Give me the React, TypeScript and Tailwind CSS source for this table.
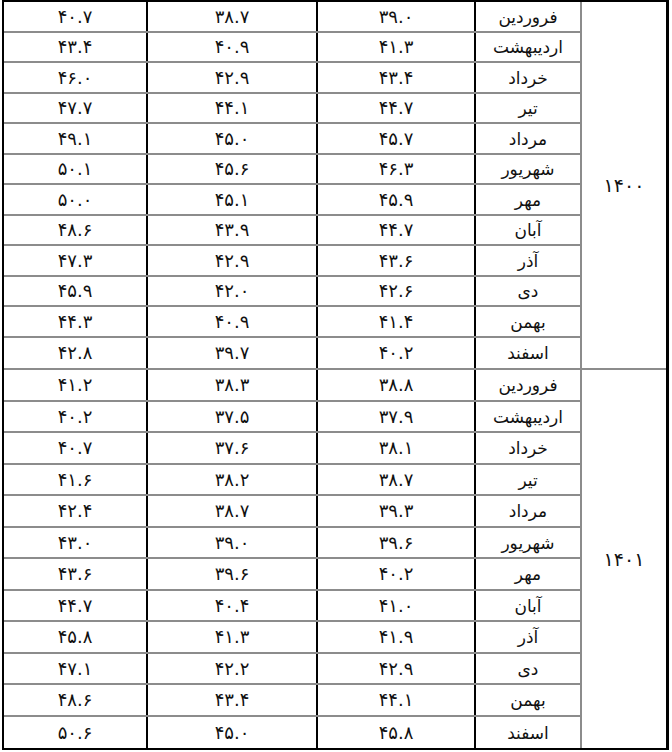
const groups = [
  {
    year: "۱۴۰۰",
    rowH: "h-[30.5px]",
    rows: [
      ["۴۰.۷", "۳۸.۷", "۳۹.۰", "فروردین"],
      ["۴۳.۴", "۴۰.۹", "۴۱.۳", "اردیبهشت"],
      ["۴۶.۰", "۴۲.۹", "۴۳.۴", "خرداد"],
      ["۴۷.۷", "۴۴.۱", "۴۴.۷", "تیر"],
      ["۴۹.۱", "۴۵.۰", "۴۵.۷", "مرداد"],
      ["۵۰.۱", "۴۵.۶", "۴۶.۳", "شهریور"],
      ["۵۰.۰", "۴۵.۱", "۴۵.۹", "مهر"],
      ["۴۸.۶", "۴۳.۹", "۴۴.۷", "آبان"],
      ["۴۷.۳", "۴۲.۹", "۴۳.۶", "آذر"],
      ["۴۵.۹", "۴۲.۰", "۴۲.۶", "دی"],
      ["۴۴.۳", "۴۰.۹", "۴۱.۴", "بهمن"],
      ["۴۲.۸", "۳۹.۷", "۴۰.۲", "اسفند"],
    ],
  },
  {
    year: "۱۴۰۱",
    rowH: "h-[31.5px]",
    rows: [
      ["۴۱.۲", "۳۸.۳", "۳۸.۸", "فروردین"],
      ["۴۰.۲", "۳۷.۵", "۳۷.۹", "اردیبهشت"],
      ["۴۰.۷", "۳۷.۶", "۳۸.۱", "خرداد"],
      ["۴۱.۶", "۳۸.۲", "۳۸.۷", "تیر"],
      ["۴۲.۴", "۳۸.۷", "۳۹.۳", "مرداد"],
      ["۴۳.۰", "۳۹.۰", "۳۹.۶", "شهریور"],
      ["۴۳.۶", "۳۹.۶", "۴۰.۲", "مهر"],
      ["۴۴.۷", "۴۰.۴", "۴۱.۰", "آبان"],
      ["۴۵.۸", "۴۱.۳", "۴۱.۹", "آذر"],
      ["۴۷.۱", "۴۲.۲", "۴۲.۹", "دی"],
      ["۴۸.۶", "۴۳.۴", "۴۴.۱", "بهمن"],
      ["۵۰.۶", "۴۵.۰", "۴۵.۸", "اسفند"],
    ],
  },
];

export default function App() {
  return (
    <div
      className="h-[752px] w-[672px] bg-white pl-[2px] text-[#111]"
      style={{ fontFamily: '"DejaVu Sans", sans-serif' }}
    >
      <div className="w-[667px] border-t-2 border-b-2 border-l-2 border-r-[3px] border-black">
        {groups.map((g, gi) => (
          <div
            key={g.year}
            className={`flex ${gi === 0 ? "border-b-2 border-[#8c8c8c]" : ""}`}
          >
            <div className="flex flex-col">
              {g.rows.map((r, ri) => (
                <div
                  key={ri}
                  className={`flex ${g.rowH} ${
                    ri < g.rows.length - 1 ? "border-b-2 border-[#8c8c8c]" : ""
                  }`}
                >
                  <div className="flex w-[144px] items-center justify-center border-r-2 border-black text-[18px]">
                    {r[0]}
                  </div>
                  <div className="flex w-[170px] items-center justify-center border-r-2 border-black text-[18px]">
                    {r[1]}
                  </div>
                  <div className="flex w-[158px] items-center justify-center border-r-2 border-black text-[18px]">
                    {r[2]}
                  </div>
                  <div
                    dir="rtl"
                    className="flex w-[106px] items-center justify-center border-r-2 border-[#8c8c8c] pt-[2px] text-[17px]"
                  >
                    {r[3]}
                  </div>
                </div>
              ))}
            </div>
            <div className="flex flex-1 items-center justify-center text-[19px]">
              {g.year}
            </div>
          </div>
        ))}
      </div>
    </div>
  );
}
